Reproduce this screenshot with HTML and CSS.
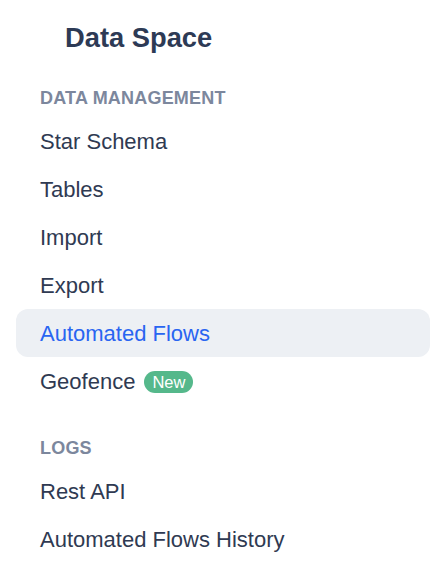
FILE: index.html
```html
<!DOCTYPE html>
<html lang="en">
<head>
<meta charset="utf-8">
<title>Data Space</title>
<link rel="stylesheet" href="styles.css">
</head>
<body>
<nav class="sidebar">
  <h1 class="title">Data Space</h1>
  <section class="group">
    <h2 class="group-label">DATA MANAGEMENT</h2>
    <ul class="menu">
      <li class="item">Star Schema</li>
      <li class="item">Tables</li>
      <li class="item">Import</li>
      <li class="item">Export</li>
      <li class="item active">Automated Flows</li>
      <li class="item">Geofence <span class="badge">New</span></li>
    </ul>
  </section>
  <section class="group">
    <h2 class="group-label">LOGS</h2>
    <ul class="menu">
      <li class="item">Rest API</li>
      <li class="item">Automated Flows History</li>
    </ul>
  </section>
</nav>
</body>
</html>
```
FILE: styles.css
```css
html, body {
  margin: 0;
  padding: 0;
  background: #ffffff;
}
body {
  font-family: "Liberation Sans", Arial, sans-serif;
  color: #2f3a52;
}
.sidebar {
  display: flex;
  flex-direction: column;
  padding: 22px 6px 0 16px;
}
.title {
  margin: 0;
  padding-left: 49px;
  font-size: 27.3px;
  line-height: 32px;
  font-weight: bold;
  color: #2d3a55;
}
.group {
  display: flex;
  flex-direction: column;
  gap: 7px;
  margin-top: 32px;
}
.group + .group {
  margin-top: 31px;
}
.group-label {
  margin: 0;
  padding-left: 24px;
  font-size: 18px;
  line-height: 24px;
  font-weight: bold;
  color: #7c879d;
  letter-spacing: 0.2px;
}
.menu {
  list-style: none;
  margin: 0;
  padding: 0;
  display: flex;
  flex-direction: column;
}
.item {
  display: flex;
  align-items: center;
  gap: 9px;
  height: 48px;
  padding-left: 24px;
  padding-top: 2px;
  box-sizing: border-box;
  font-size: 22px;
  color: #2f3a52;
  border-radius: 12px;
}
.item.active {
  background: #edf0f4;
  color: #2965f1;
}
.badge {
  display: inline-flex;
  align-items: center;
  height: 22px;
  padding: 0 8px;
  border-radius: 11px;
  background: #55b88b;
  color: #ffffff;
  font-size: 16.5px;
}
```
